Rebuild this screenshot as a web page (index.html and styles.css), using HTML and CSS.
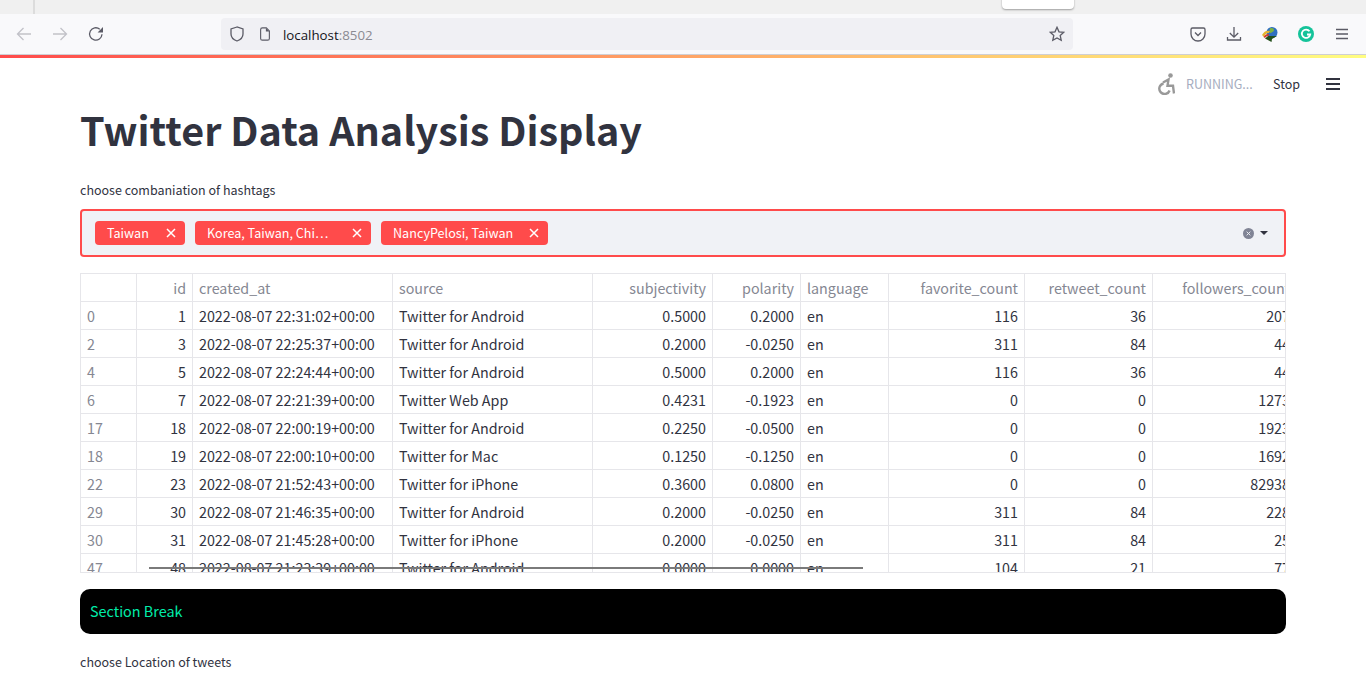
FILE: index.html
```html
<!DOCTYPE html>
<html lang="en">
<head>
    <meta charset="UTF-8">
    <meta name="viewport" content="width=device-width, initial-scale=1.0">
    <title>Twitter Data Analysis Display</title>
    <link rel="stylesheet" href="styles.css">
</head>
<body>
    <div class="tabstrip">
        <div class="tab-edge"></div>
        <div class="tab-popup"></div>
    </div>
    <div class="toolbar">
        <div class="nav-group">
            <svg class="tb-icon" viewBox="0 0 16 16"><path class="disabled" d="M15 8H1.500M7.500 2 1.500 8l6 6"/></svg>
            <svg class="tb-icon" viewBox="0 0 16 16"><path class="disabled" d="M1 8h13.500M8.500 2l6 6-6 6"/></svg>
            <svg class="tb-icon" viewBox="0 0 16 16"><path d="M14 8.300A6.200 6.200 0 1 1 11.800 3.200"/><path class="solid" d="M15 1v5.400H9.600z"/></svg>
        </div>
        <div class="urlbar">
            <svg class="url-icon" viewBox="0 0 16 16"><path d="M8 1 2 3v5c0 3.500 2.600 5.800 6 7 3.400-1.200 6-3.500 6-7V3z"/></svg>
            <svg class="url-icon" viewBox="0 0 16 16"><path d="M3 3a2 2 0 0 1 2-2h4.500L13 4.500V13a2 2 0 0 1-2 2H5a2 2 0 0 1-2-2z"/><path class="solid" d="M9 1l4 4H9z"/></svg>
            <span class="url-text">localhost<span class="url-port">:8502</span></span>
            <svg class="star" viewBox="0 0 16 16"><path d="M8 1.300l2 4.500 4.800.5-3.600 3.200 1 4.800L8 12l-4.200 2.300 1-4.800L1.200 6.300 6 5.800z"/></svg>
        </div>
        <div class="tools">
            <svg class="tb-icon" viewBox="0 0 16 16"><path d="M2.500 2h11A1.500 1.500 0 0 1 15 3.500V8a7 7 0 0 1-14 0V3.500A1.500 1.500 0 0 1 2.500 2z"/><path d="M5 6.500l3 3 3-3"/></svg>
            <svg class="tb-icon" viewBox="0 0 16 16"><path d="M8 1v10M3.800 7 8 11.200 12.200 7M1.500 11v3h13v-3"/></svg>
            <svg class="tb-icon plain" viewBox="0 0 16 16">
                <circle cx="10" cy="6.500" r="5.500" fill="#2f6fc0"/>
                <path d="M8 2.500c2-1 4 0 4 1.500s-2 2-3 3-2-3-1-4.500z" fill="#7cb342"/>
                <path d="M0 9c2-4 5-5 8-4l-1 2C5 6.500 3 8 2 11z" fill="#e3b52f"/>
                <path d="M1.500 11c1.500-2.500 3.500-3.500 5.500-3l-.5 2c-1.500 0-2.500.5-3.500 2z" fill="#d23b2c"/>
                <path d="M3 12.500l3-2.500h9l-5 3-.5 3z" fill="#24501c"/>
            </svg>
            <svg class="tb-icon plain" viewBox="0 0 16 16"><circle cx="8" cy="8" r="8" fill="#15c39a"/><path d="M11.500 5.300A4.200 4.200 0 1 0 12.200 8.500H9" fill="none" stroke="#fff" stroke-width="1.800"/></svg>
            <svg class="tb-icon" viewBox="0 0 16 16"><path d="M2 3.500h12M2 8h12M2 12.500h12"/></svg>
        </div>
    </div>
    <div class="decoration"></div>

    <div class="app-header">
        <svg class="run-icon" viewBox="0 0 18 22">
            <circle class="head" cx="13.500" cy="2.500" r="2.300"/>
            <path d="M6 9.500 11.500 6.500 10.500 12.800H16L17 20.500"/>
            <path d="M6.600 10.500a5.300 5.300 0 1 0 6 7"/>
        </svg>
        <span class="running">RUNNING...</span>
        <span class="stop">Stop</span>
        <div class="menu-btn"><i></i><i></i><i></i></div>
    </div>

    <div class="main">
        <h1>Twitter Data Analysis Display</h1>
        <label class="field-label">choose combaniation of hashtags</label>
        <div class="select">
            <div class="chip chip-a"><span class="chip-text">Taiwan</span><svg class="chip-x" viewBox="0 0 10 10"><path d="M1 1l8 8M9 1l-8 8"/></svg></div>
            <div class="chip chip-b"><span class="chip-text">Korea, Taiwan, Chi…</span><svg class="chip-x" viewBox="0 0 10 10"><path d="M1 1l8 8M9 1l-8 8"/></svg></div>
            <div class="chip chip-c"><span class="chip-text">NancyPelosi, Taiwan</span><svg class="chip-x" viewBox="0 0 10 10"><path d="M1 1l8 8M9 1l-8 8"/></svg></div>
            <div class="select-controls">
                <svg class="clear" viewBox="0 0 12 12"><circle cx="6" cy="6" r="6"/><path d="M4 4l4 4M8 4l-4 4"/></svg>
                <div class="caret"></div>
            </div>
        </div>

        <div class="table-wrap">
            <table class="data">
                <colgroup>
                    <col class="w56"><col class="w56"><col class="w200"><col class="w200"><col class="w120"><col class="w88"><col class="w88"><col class="w136"><col class="w128"><col class="w144">
                </colgroup>
                <thead>
                    <tr>
                        <th></th><th class="num">id</th><th>created_at</th><th>source</th><th class="num">subjectivity</th><th class="num">polarity</th><th>language</th><th class="num">favorite_count</th><th class="num">retweet_count</th><th class="num">followers_count</th>
                    </tr>
                </thead>
                <tbody>
                    <tr><th>0</th><td class="num">1</td><td>2022-08-07 22:31:02+00:00</td><td>Twitter for Android</td><td class="num">0.5000</td><td class="num">0.2000</td><td>en</td><td class="num">116</td><td class="num">36</td><td class="num">207</td></tr>
                    <tr><th>2</th><td class="num">3</td><td>2022-08-07 22:25:37+00:00</td><td>Twitter for Android</td><td class="num">0.2000</td><td class="num">-0.0250</td><td>en</td><td class="num">311</td><td class="num">84</td><td class="num">44</td></tr>
                    <tr><th>4</th><td class="num">5</td><td>2022-08-07 22:24:44+00:00</td><td>Twitter for Android</td><td class="num">0.5000</td><td class="num">0.2000</td><td>en</td><td class="num">116</td><td class="num">36</td><td class="num">44</td></tr>
                    <tr><th>6</th><td class="num">7</td><td>2022-08-07 22:21:39+00:00</td><td>Twitter Web App</td><td class="num">0.4231</td><td class="num">-0.1923</td><td>en</td><td class="num">0</td><td class="num">0</td><td class="num">1273</td></tr>
                    <tr><th>17</th><td class="num">18</td><td>2022-08-07 22:00:19+00:00</td><td>Twitter for Android</td><td class="num">0.2250</td><td class="num">-0.0500</td><td>en</td><td class="num">0</td><td class="num">0</td><td class="num">1923</td></tr>
                    <tr><th>18</th><td class="num">19</td><td>2022-08-07 22:00:10+00:00</td><td>Twitter for Mac</td><td class="num">0.1250</td><td class="num">-0.1250</td><td>en</td><td class="num">0</td><td class="num">0</td><td class="num">1692</td></tr>
                    <tr><th>22</th><td class="num">23</td><td>2022-08-07 21:52:43+00:00</td><td>Twitter for iPhone</td><td class="num">0.3600</td><td class="num">0.0800</td><td>en</td><td class="num">0</td><td class="num">0</td><td class="num">82938</td></tr>
                    <tr><th>29</th><td class="num">30</td><td>2022-08-07 21:46:35+00:00</td><td>Twitter for Android</td><td class="num">0.2000</td><td class="num">-0.0250</td><td>en</td><td class="num">311</td><td class="num">84</td><td class="num">228</td></tr>
                    <tr><th>30</th><td class="num">31</td><td>2022-08-07 21:45:28+00:00</td><td>Twitter for iPhone</td><td class="num">0.2000</td><td class="num">-0.0250</td><td>en</td><td class="num">311</td><td class="num">84</td><td class="num">25</td></tr>
                    <tr><th>47</th><td class="num">48</td><td>2022-08-07 21:23:39+00:00</td><td>Twitter for Android</td><td class="num">0.0000</td><td class="num">0.0000</td><td>en</td><td class="num">104</td><td class="num">21</td><td class="num">77</td></tr>
                </tbody>
            </table>
            <div class="strike"></div>
        </div>

        <div class="section-break">Section Break</div>
        <label class="field-label">choose Location of tweets</label>
    </div>
</body>
</html>
```

FILE: styles.css
```css
html, body { margin: 0; padding: 0; height: 675px; overflow: hidden; }
body { background: #ffffff; color: #31333f; font-family: "Noto Sans CJK SC", "Noto Sans", sans-serif; }

/* browser chrome */
.tabstrip { height: 14px; background: #f0f0f0; position: relative; }
.tab-edge { width: 2px; height: 14px; margin-left: 33px; background: #dcdcdc; }
.tab-popup { position: absolute; left: 1002px; top: -6px; width: 72px; height: 15px; background: #fff; border-radius: 4px; box-shadow: 0 1px 2px rgba(0,0,0,.35); }
.toolbar { height: 40px; background: #f9f9fb; border-bottom: 1px solid #cfcfd4; display: flex; align-items: center; font-family: "Open Sans", sans-serif; }
.nav-group { display: flex; gap: 20px; width: 221px; padding-left: 16px; box-sizing: border-box; }
.tb-icon { width: 16px; height: 16px; fill: none; stroke: #5b5b66; stroke-width: 1.300; flex: none; }
.tb-icon .disabled { stroke: #c2c2c8; }
.tb-icon .solid { fill: #5b5b66; stroke: none; }
.tb-icon.plain { stroke: none; }
.urlbar { width: 852px; height: 32px; background: #f0f0f4; border-radius: 4px; display: flex; align-items: center; padding: 0 8px; box-sizing: border-box; }
.url-icon { width: 16px; height: 16px; fill: none; stroke: #5b5b66; stroke-width: 1.300; margin-right: 13px; }
.url-icon + .url-icon { width: 14px; margin-right: 11px; }
.url-icon .solid { fill: #5b5b66; stroke: none; }
.url-text { font-size: 13.300px; color: #15141a; flex: 1; padding-top: 2px; }
.url-port { color: #8a8a92; }
.star { width: 16px; height: 16px; fill: none; stroke: #5b5b66; stroke-width: 1.300; }
.tools { display: flex; gap: 20px; margin-left: 117px; }
.decoration { height: 3px; background: linear-gradient(90deg, #ff4b4b, #fffd80); }

/* streamlit header */
.app-header { height: 48px; padding: 4px 26px 0 0; display: flex; align-items: center; box-sizing: border-box; justify-content: flex-end; font-size: 12.500px; }
.run-icon { width: 18px; height: 22px; fill: none; stroke: #999999; stroke-width: 2.400; margin-right: 11px; }
.run-icon .head { fill: #999999; stroke: none; }
.running { color: #a6adc0; width: 66px; white-space: nowrap; padding-bottom: 2px; }
.stop { margin-left: 21px; margin-right: 26px; padding-bottom: 2px; }
.menu-btn { width: 14px; display: flex; flex-direction: column; gap: 3px; }
.menu-btn i { display: block; height: 2px; background: #31333f; }

/* page */
.main { padding: 0 80px; }
h1 { margin: 0; font-size: 39.500px; line-height: 46px; font-weight: 700; height: 46px; padding-bottom: 29px; }
.field-label { display: block; font-size: 12.500px; line-height: 18px; height: 18px; }

.select { height: 48px; margin-top: 10px; border: 2px solid #ff4b4b; border-radius: 4px; background: #f0f2f6; box-sizing: border-box; display: flex; align-items: center; padding-left: 13px; gap: 10px; }
.chip { height: 24px; background: #ff4b4b; border-radius: 4px; color: #fff; font-size: 12.600px; line-height: 24px; display: flex; align-items: center; justify-content: space-between; padding: 0 9px 0 12px; box-sizing: border-box; white-space: nowrap; }
.chip-a { width: 90px; }
.chip-b { width: 176px; }
.chip-c { width: 167px; }
.chip-x { width: 10px; height: 10px; fill: none; stroke: #fff; stroke-width: 1.500; }
.select-controls { margin-left: auto; margin-right: 16px; display: flex; align-items: center; gap: 6px; }
.clear { width: 11px; height: 11px; fill: #808495; stroke: #f0f2f6; stroke-width: 1; }
.clear circle { stroke: none; }
.caret { border: 4px solid transparent; border-top-color: #31333f; border-bottom: 0; }

.table-wrap { position: relative; margin-top: 16px; height: 300px; box-sizing: border-box; border: 1px solid #e6e6ea; overflow: hidden; }
.data { table-layout: fixed; border-collapse: separate; border-spacing: 0; width: 1216px; font-size: 14.300px; }
.w56 { width: 56px; }
.w88 { width: 88px; }
.w120 { width: 120px; }
.w128 { width: 128px; }
.w136 { width: 136px; }
.w144 { width: 144px; }
.w200 { width: 200px; }
.data th, .data td { height: 28px; box-sizing: border-box; padding: 0 6px; border-right: 1px solid #e6e6ea; border-bottom: 1px solid #e6e6ea; font-weight: 400; text-align: left; line-height: 27px; white-space: nowrap; overflow: hidden; }
.data th { color: #858792; }
.data .num { text-align: right; }
.strike { position: absolute; left: 68px; top: 293px; width: 714px; height: 2px; background: #7a7a7a; }

.section-break { margin-top: 16px; height: 45px; background: #000; border-radius: 10px; color: #00ecaa; font-size: 14.400px; line-height: 44px; padding-left: 10px; margin-bottom: 19px; }
```
